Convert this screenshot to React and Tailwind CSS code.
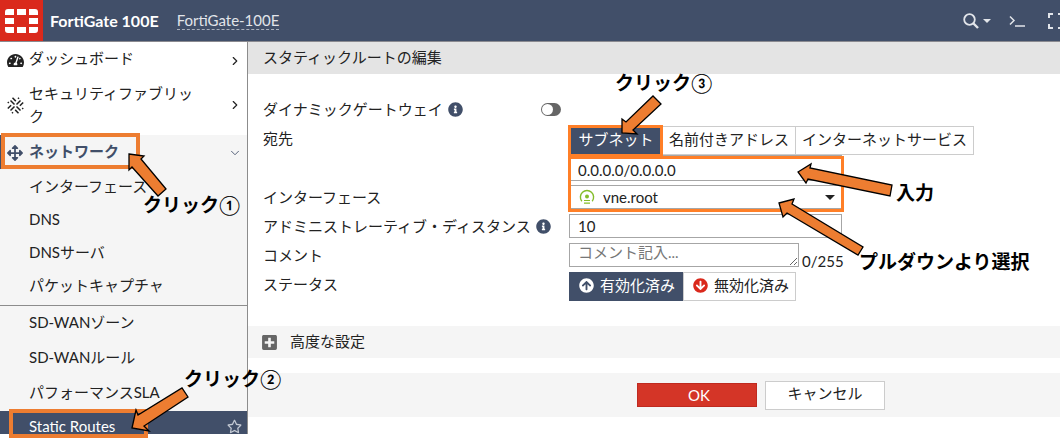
import { FaTachometerAlt, FaArrowsAlt, FaRegStar, FaInfoCircle, FaPlusSquare, FaArrowCircleUp, FaArrowCircleDown } from 'react-icons/fa';
import { ChevronRight, ChevronDown } from 'lucide-react';

const networkItems = ['インターフェース', 'DNS', 'DNSサーバ', 'パケットキャプチャ'];
const sdwanItems = ['SD-WANゾーン', 'SD-WANルール', 'パフォーマンスSLA'];

const arrows = [
    '129,154 144,156 141,159 166,189 158,196 132,167 129,170',
    '132,428 136,410 138,415 182,388 188,397 144,426 149,431',
    '622,133 622,119 626,122 653,96 661,104 633,130 637,134',
    '798,172 811,164 810,168 892,185 890,196 808,179 806,183',
    '779,203 794,199 792,204 863,247 858,255 787,213 783,217'
];

const Logo = () => (
    <div className="flex h-[41px] w-[43px] items-center justify-center bg-[#da291c]">
        <svg width="33" height="24" viewBox="0 0 33 24" fill="#fff">
            <path d="M3 0H9V6H0V3Q0 0 3 0ZM12 0H21V6H12ZM24 0H30Q33 0 33 3V6H24ZM0 9H9V15H0ZM24 9H33V15H24ZM0 18H9V24H3Q0 24 0 21ZM12 18H21V24H12ZM24 18H33V21Q33 24 30 24H24Z" />
        </svg>
    </div>
);

const FabricIcon = () => (
    <svg width="17" height="17" viewBox="0 0 17 17" fill="none" stroke="#222" strokeWidth="1.5" className="shrink-0">
        <path d="M3.5 3.5L7.5 7.5M13.5 3.5L9.5 7.5M9.5 9.5L13.5 13.5M7.5 9.5L3.5 13.5" />
        <path d="M5.5 0.8L8.8 4.1M16.2 5.5L12.9 8.8M11.5 16.2L8.2 12.9M0.8 11.5L4.1 8.2" />
        <path d="M11 1.8L12 0.8M0.8 5L1.8 6M5 16.2L6 15.2M15.2 11L16.2 12" />
    </svg>
);

const Header = () => (
    <header className="flex h-[42px] items-start border-b border-[#8a8a90] bg-[#414f69] text-[#e2e5ea]">
        <Logo />
        <h1 className="ml-[7px] text-[16px] leading-[41px] font-bold text-white">FortiGate 100E</h1>
        <span className="mt-[11px] ml-[18px] border-b border-dashed border-[#a9b0bd] text-[15px] leading-[18px]">FortiGate-100E</span>
        <div className="ml-auto flex h-[41px] shrink-0 items-center">
            <button type="button" aria-label="Search" className="flex items-center gap-1">
                <svg width="16" height="16" viewBox="0 0 16 16" fill="none" stroke="currentColor" strokeWidth="1.8">
                    <circle cx="6.5" cy="6.5" r="5.3" />
                    <path d="M10.5 10.5L15 15" strokeWidth="2.4" />
                </svg>
                <svg width="8" height="4" viewBox="0 0 8 4" fill="currentColor"><path d="M0 0H8L4 4Z" /></svg>
            </button>
            <button type="button" aria-label="CLI console" className="ml-[18px]">
                <svg width="16" height="12" viewBox="0 0 16 12" fill="none" stroke="currentColor" strokeWidth="1.5">
                    <path d="M1 1.5L5 5.5L1 9.5M6 11H16" />
                </svg>
            </button>
            <button type="button" aria-label="Full screen" className="ml-[23px] w-3 overflow-hidden">
                <svg width="16" height="16" viewBox="0 0 16 16" fill="none" stroke="currentColor" strokeWidth="2">
                    <path d="M1 5V1H5M10 1H15V5M1 11V15H5M10 15H15V11" />
                </svg>
            </button>
        </div>
    </header>
);

const Sidebar = () => (
    <nav className="w-[248px] shrink-0 self-start border-r border-[#8c8c8c] leading-[23px]">
        <a href="#dashboard" className="flex h-[35px] items-center pr-1 pb-[2px] pl-[7px]">
            <FaTachometerAlt size={17} className="mt-1 shrink-0" />
            <span className="ml-[5px] flex-1">ダッシュボード</span>
            <ChevronRight size={14} strokeWidth={2} className="mt-1 mr-px shrink-0" />
        </a>
        <a href="#fabric" className="flex h-[58px] items-center pr-1 pb-[2px] pl-[7px]">
            <FabricIcon />
            <span className="ml-[5px] w-[170px]">セキュリティファブリック</span>
            <ChevronRight size={14} strokeWidth={2} className="mr-px ml-auto shrink-0" />
        </a>
        <div className="bg-[#f5f5f5]">
            <a href="#network" className="flex h-[34px] items-center border-l-2 border-[#414f69] pr-[5px] pb-[2px] pl-[5px] font-bold text-[#414f69]">
                <FaArrowsAlt size={16} className="mt-1 shrink-0" />
                <span className="ml-[6px] flex-1">ネットワーク</span>
                <ChevronDown size={14} strokeWidth={1.5} className="mt-1 shrink-0" />
            </a>
            <ul className="border-b border-[#8c8c8c] pt-px pb-[3px]">
                {networkItems.map((item) => (
                    <li key={item}>
                        <a href="#network" className="flex h-[33px] items-center pl-[29px]">{item}</a>
                    </li>
                ))}
            </ul>
            <ul>
                {sdwanItems.map((item) => (
                    <li key={item}>
                        <a href="#sdwan" className="flex h-[35px] items-center pb-[2px] pl-[29px]">{item}</a>
                    </li>
                ))}
            </ul>
            <a href="#static-routes" className="flex h-[23px] items-start overflow-hidden bg-[#414f69] pt-1 pr-[5px] pl-[29px] text-white">
                <span className="flex-1">Static Routes</span>
                <FaRegStar size={15} className="mt-1 text-[#c3c9d3]" />
            </a>
        </div>
    </nav>
);

const InfoIcon = () => <FaInfoCircle size={15} className="ml-[5px] text-[#414f69]" />;

const tabStyle = 'h-[29px] border-y border-r border-[#ccc] px-[6px] pb-1 whitespace-nowrap';
const fieldStyle = 'block h-[24px] w-[273px] border border-[#a6a6a6] bg-white px-2';

const RouteForm = () => (
    <form className="flex flex-col pt-[23px] pl-[15px]">
        <div className="mb-[5px] flex h-[24px] items-center">
            <label htmlFor="gateway" className="flex w-[278px] items-center">ダイナミックゲートウェイ<InfoIcon /></label>
            <span className="relative flex">
                <input id="gateway" type="checkbox" role="switch" className="h-[13px] w-[20px] appearance-none rounded-full bg-[#666]" />
                <span className="pointer-events-none absolute top-px left-px size-[11px] rounded-full bg-white"></span>
            </span>
        </div>
        <div className="mb-1 flex items-start">
            <label htmlFor="destination" className="w-[306px] shrink-0 leading-[24px]">宛先</label>
            <div>
                <div className="flex">
                    <button type="button" className="h-[29px] w-[94px] border border-[#ccc] bg-[#414f69] pb-1 text-white">サブネット</button>
                    <button type="button" className={tabStyle}>名前付きアドレス</button>
                    <button type="button" className={tabStyle}>インターネットサービス</button>
                </div>
                <input id="destination" defaultValue="0.0.0.0/0.0.0.0" className="block h-[26px] w-[273px] border border-[#a6a6a6] px-2 pt-1" />
            </div>
        </div>
        <div className="mb-[5px] flex h-[24px] items-center">
            <label htmlFor="interface" className="w-[306px] shrink-0">インターフェース</label>
            <div className="relative">
                <select id="interface" className="block h-[24px] w-[273px] appearance-none border border-[#a6a6a6] bg-white pl-[33px]">
                    <option>vne.root</option>
                </select>
                <svg className="pointer-events-none absolute top-[4px] left-[10px]" width="16" height="16" viewBox="0 0 16 16" fill="none" stroke="#84bd2b" strokeWidth="1.4">
                    <path d="M2.8 12.2A6.6 6.6 0 1 1 13.2 12.2" />
                    <circle cx="8" cy="7.5" r="2" fill="#84bd2b" stroke="none" />
                    <path d="M5 11.5H11M5 14.2H11" strokeWidth="1.2" />
                </svg>
                <svg className="pointer-events-none absolute top-[10px] right-[7px]" width="10" height="5" viewBox="0 0 10 5"><path d="M0 0H10L5 5Z" fill="#222" /></svg>
            </div>
        </div>
        <div className="mb-[5px] flex h-[24px] items-center">
            <label htmlFor="distance" className="flex w-[306px] shrink-0 items-center">アドミニストレーティブ・ディスタンス<InfoIcon /></label>
            <input id="distance" defaultValue="10" className={fieldStyle} />
        </div>
        <div className="mb-[5px] flex h-[24px] items-center">
            <label htmlFor="comment" className="w-[306px] shrink-0">コメント</label>
            <textarea id="comment" placeholder="コメント記入..." className="block h-[24px] w-[230px] resize overflow-hidden border border-[#a6a6a6] px-2 leading-[16px] placeholder:text-[#777]"></textarea>
            <span className="mt-3 ml-[3px]">0/255</span>
        </div>
        <div className="flex items-start">
            <span className="w-[306px] shrink-0 leading-[24px]">ステータス</span>
            <button type="button" className="flex h-[29px] items-center gap-[6px] bg-[#414f69] pr-2 pb-[3px] pl-[10px] text-white"><FaArrowCircleUp size={15} />有効化済み</button>
            <button type="button" className="flex h-[29px] items-center gap-[6px] border border-[#ccc] pr-[6px] pb-[3px] pl-[9px]"><FaArrowCircleDown size={15} className="text-[#da291c]" />無効化済み</button>
        </div>
    </form>
);

const Annotations = () => (
    <div className="pointer-events-none absolute inset-0 text-[19px] leading-[24px] font-bold whitespace-nowrap text-black">
        <div className="absolute top-[133px] left-px h-[36px] w-[139px] border-4 border-[#ed7d31]"></div>
        <div className="absolute top-[409px] left-[9px] h-[29px] w-[139px] border-4 border-[#ed7d31]"></div>
        <div className="absolute top-[125px] left-[568px] h-[32px] w-[95px] border-3 border-[#ff7f27]"></div>
        <div className="absolute top-[156px] left-[568px] h-[56px] w-[276px] border-3 border-[#ff7f27]"></div>
        <svg className="absolute top-0 left-0" width="1060" height="441" fill="#ed7d31" stroke="#000" strokeWidth="1.3">
            {arrows.map((points) => <polygon key={points} points={points} />)}
        </svg>
        <span className="absolute top-[193px] left-[143px]">クリック<span className="font-medium">①</span></span>
        <span className="absolute top-[367px] left-[184px]">クリック<span className="font-medium">②</span></span>
        <span className="absolute top-[71px] left-[615px]">クリック<span className="font-medium">③</span></span>
        <span className="absolute top-[181px] left-[896px]">入力</span>
        <span className="absolute top-[250px] left-[859px]">プルダウンより選択</span>
    </div>
);

const App = () => {
    return (
        <div lang="ja" className="relative min-h-screen overflow-hidden bg-white font-[Lato,'Noto_Sans_CJK_JP',sans-serif] text-[15px] leading-[22px] text-[#222]">
            <Header />
            <div className="flex">
                <Sidebar />
                <main className="min-w-0 flex-1">
                    <h2 className="h-[32px] bg-[#e4e4e4] pl-[15px] leading-[31px]">スタティックルートの編集</h2>
                    <RouteForm />
                    <button type="button" className="mt-[25px] flex h-[32px] w-full items-center bg-[#f5f5f5] pb-[2px] pl-[13px]">
                        <FaPlusSquare size={17} className="mt-[2px] mr-[12px] text-[#666]" />高度な設定
                    </button>
                    <div className="mt-[15px] flex h-[44px] items-center gap-2 bg-[#f5f5f5] pl-[389px]">
                        <button type="button" className="h-[24px] w-[120px] border border-[#bf2a20] bg-[#d43527] pl-1 text-white">OK</button>
                        <button type="button" className="h-[29px] w-[120px] border border-[#ccc] bg-white pb-1">キャンセル</button>
                    </div>
                </main>
            </div>
            <Annotations />
        </div>
    );
};

export default App;
